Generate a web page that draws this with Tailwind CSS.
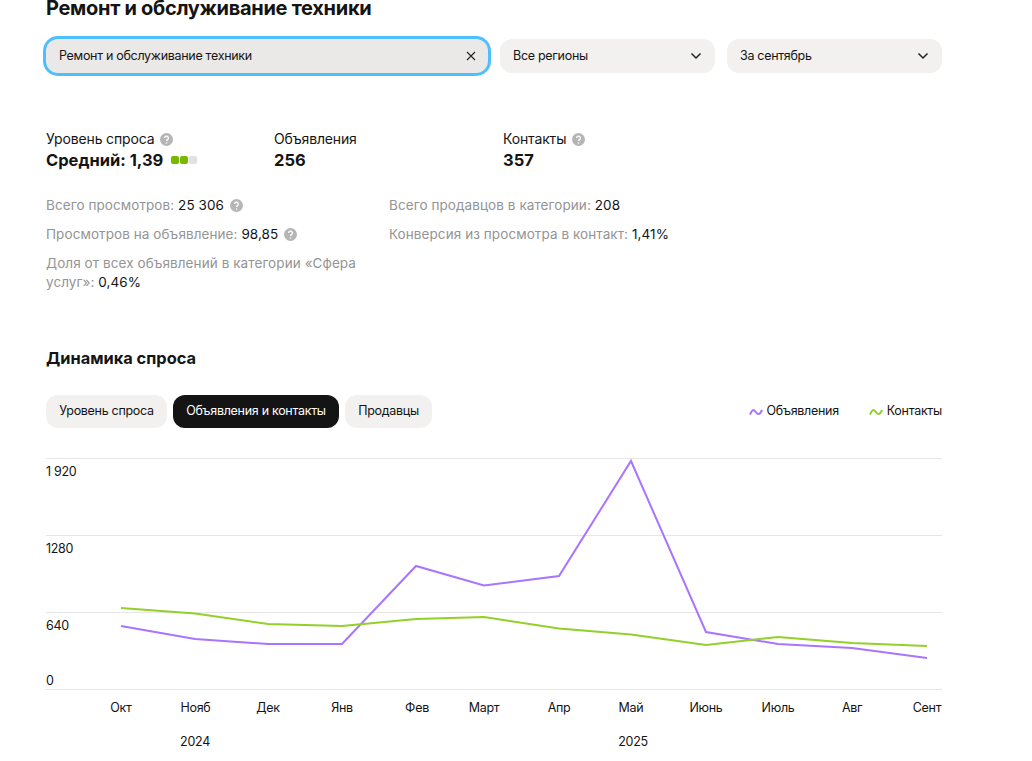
<!DOCTYPE html>
<html lang="ru">
<head>
<meta charset="UTF-8">
<script src="https://cdn.jsdelivr.net/npm/@tailwindcss/browser@4"></script>
<title>Ремонт и обслуживание техники</title>
</head>
<body class="bg-white overflow-hidden">
<div class="w-[896px] ml-[46px] -mt-[7px] font-['Inter',sans-serif] text-[#141414]">
  <h1 class="text-[20px] leading-[30px] font-bold tracking-[-0.3px]">Ремонт и обслуживание техники</h1>

  <div class="flex gap-3 mt-[16px] text-[12.5px] tracking-[-0.3px]">
    <div class="w-[442px] h-[34px] rounded-[12px] bg-[#eae9e7] ring-[3px] ring-[#4dbfff] flex items-center justify-between pl-[13px] pr-[12px]">
      <span>Ремонт и обслуживание техники</span>
      <svg class="w-[10px] h-[10px]" viewBox="0 0 10 10" fill="none" stroke="#222" stroke-width="1.1"><path d="M1 1l8 8M9 1l-8 8"/></svg>
    </div>
    <div class="w-[215px] h-[34px] rounded-[12px] bg-[#f2f1ef] flex items-center justify-between pl-[13px] pr-[13px]">
      <span>Все регионы</span>
      <svg class="w-[12px] h-[8px]" viewBox="0 0 12 8" fill="none" stroke="#222" stroke-width="1.5"><path d="M1.5 1.5L6 6l4.5-4.5"/></svg>
    </div>
    <div class="w-[215px] h-[34px] rounded-[12px] bg-[#f2f1ef] flex items-center justify-between pl-[13px] pr-[13px]">
      <span>За сентябрь</span>
      <svg class="w-[12px] h-[8px]" viewBox="0 0 12 8" fill="none" stroke="#222" stroke-width="1.5"><path d="M1.5 1.5L6 6l4.5-4.5"/></svg>
    </div>
  </div>

  <div class="grid grid-cols-[228px_229px_1fr] mt-[56px]">
    <div>
      <div class="flex items-center gap-[6px] text-[14px] leading-[20px] tracking-[-0.15px]">Уровень спроса
        <svg class="w-[13px] h-[13px]" viewBox="0 0 13 13"><circle cx="6.5" cy="6.5" r="6.5" fill="#b5b5b5"/><path d="M4.6 5a1.9 1.9 0 1 1 2.9 1.6c-.7.4-1 .7-1 1.4" fill="none" stroke="#fff" stroke-width="1.3"/><circle cx="6.5" cy="10" r=".8" fill="#fff"/></svg>
      </div>
      <div class="flex items-center text-[16.5px] leading-[22px] font-bold">Средний: 1,39
        <span class="flex gap-[1.5px] ml-[8px]">
          <span class="w-[7.5px] h-[8px] rounded-[2px] bg-[#7ab800]"></span>
          <span class="w-[7.5px] h-[8px] rounded-[2px] bg-[#7ab800]"></span>
          <span class="w-[7.5px] h-[8px] rounded-[2px] bg-[#e2e2e2]"></span>
        </span>
      </div>
    </div>
    <div>
      <div class="text-[14px] leading-[20px] tracking-[-0.15px]">Объявления</div>
      <div class="text-[16.5px] leading-[22px] font-bold">256</div>
    </div>
    <div>
      <div class="flex items-center gap-[6px] text-[14px] leading-[20px] tracking-[-0.15px]">Контакты
        <svg class="w-[13px] h-[13px]" viewBox="0 0 13 13"><circle cx="6.5" cy="6.5" r="6.5" fill="#b5b5b5"/><path d="M4.6 5a1.9 1.9 0 1 1 2.9 1.6c-.7.4-1 .7-1 1.4" fill="none" stroke="#fff" stroke-width="1.3"/><circle cx="6.5" cy="10" r=".8" fill="#fff"/></svg>
      </div>
      <div class="text-[16.5px] leading-[22px] font-bold">357</div>
    </div>
  </div>

  <div class="grid grid-cols-[343px_1fr] mt-[25px] text-[13.5px] leading-[19px] tracking-[0.08px] text-[#949494]">
    <div class="flex flex-col gap-[10px] w-[325px]">
      <div class="flex items-center gap-[6px]"><span>Всего просмотров: <span class="text-[#141414]">25 306</span></span>
        <svg class="w-[13px] h-[13px]" viewBox="0 0 13 13"><circle cx="6.5" cy="6.5" r="6.5" fill="#b5b5b5"/><path d="M4.6 5a1.9 1.9 0 1 1 2.9 1.6c-.7.4-1 .7-1 1.4" fill="none" stroke="#fff" stroke-width="1.3"/><circle cx="6.5" cy="10" r=".8" fill="#fff"/></svg>
      </div>
      <div class="flex items-center gap-[6px]"><span>Просмотров на объявление: <span class="text-[#141414]">98,85</span></span>
        <svg class="w-[13px] h-[13px]" viewBox="0 0 13 13"><circle cx="6.5" cy="6.5" r="6.5" fill="#b5b5b5"/><path d="M4.6 5a1.9 1.9 0 1 1 2.9 1.6c-.7.4-1 .7-1 1.4" fill="none" stroke="#fff" stroke-width="1.3"/><circle cx="6.5" cy="10" r=".8" fill="#fff"/></svg>
      </div>
      <div>Доля от всех объявлений в категории «Сфера услуг»: <span class="text-[#141414]">0,46%</span></div>
    </div>
    <div class="flex flex-col gap-[10px]">
      <div>Всего продавцов в категории: <span class="text-[#141414]">208</span></div>
      <div>Конверсия из просмотра в контакт: <span class="text-[#141414]">1,41%</span></div>
    </div>
  </div>

  <h2 class="text-[16.4px] leading-[24px] font-bold mt-[54px]">Динамика спроса</h2>

  <div class="flex items-center justify-between mt-[25px] text-[12.5px] tracking-[-0.3px]">
    <div class="flex gap-[6px]">
      <div class="h-[33px] w-[121px] rounded-[12px] bg-[#f2f1ef] flex items-center justify-center">Уровень спроса</div>
      <div class="h-[33px] w-[166px] rounded-[12px] bg-[#141414] text-white flex items-center justify-center">Объявления и контакты</div>
      <div class="h-[33px] w-[87px] rounded-[12px] bg-[#f2f1ef] flex items-center justify-center">Продавцы</div>
    </div>
    <div class="flex items-center gap-[30px]">
      <div class="flex items-center gap-[4px]">
        <svg class="w-[14px] h-[8px]" viewBox="0 0 14 8" fill="none" stroke="#a974ff" stroke-width="2"><path d="M1 6.5C2 4.5 3 2 4.5 2S7.5 6 9.500 6 12 4 13 1.800"/></svg>
        <span>Объявления</span>
      </div>
      <div class="flex items-center gap-[4px]">
        <svg class="w-[14px] h-[8px]" viewBox="0 0 14 8" fill="none" stroke="#93d02a" stroke-width="2"><path d="M1 6.5C2 4.5 3 2 4.5 2S7.5 6 9.500 6 12 4 13 1.800"/></svg>
        <span>Контакты</span>
      </div>
    </div>
  </div>

  <!-- chart: viewBox uses page coordinates -->
  <svg class="block mt-[22px] tracking-[-0.3px]" width="896" height="311" viewBox="46 450 896 311" font-size="12.5" fill="#141414">
    <g stroke="#e6e6e6" stroke-width="1">
      <path d="M46 458.5H942M46 535.5H942M46 612.5H942M46 689.5H942"/>
    </g>
    <g>
      <text x="46" y="476">1 920</text>
      <text x="46" y="553">1280</text>
      <text x="46" y="630">640</text>
      <text x="46" y="685">0</text>
    </g>
    <polyline fill="none" stroke="#a974ff" stroke-width="2" points="121,626 195,639 268,644 342,644 416,566 484,585.5 559,576 631,461 706,632 778,644 852,648 927,658"/>
    <polyline fill="none" stroke="#93d02a" stroke-width="2" points="121,608 195,613.5 268,624 342,626 416,619 484,617 559,628.5 631,634.5 706,645 778,637 852,643 927,646"/>
    <g text-anchor="middle">
      <text x="121" y="712">Окт</text>
      <text x="195.500" y="712">Нояб</text>
      <text x="268" y="712">Дек</text>
      <text x="342" y="712">Янв</text>
      <text x="417" y="712">Фев</text>
      <text x="484" y="712">Март</text>
      <text x="559" y="712">Апр</text>
      <text x="631" y="712">Май</text>
      <text x="706" y="712">Июнь</text>
      <text x="778" y="712">Июль</text>
      <text x="852" y="712">Авг</text>
      <text x="927" y="712">Сент</text>
      <text x="195" y="746">2024</text>
      <text x="633" y="746">2025</text>
    </g>
  </svg>
</div>
</body>
</html>
